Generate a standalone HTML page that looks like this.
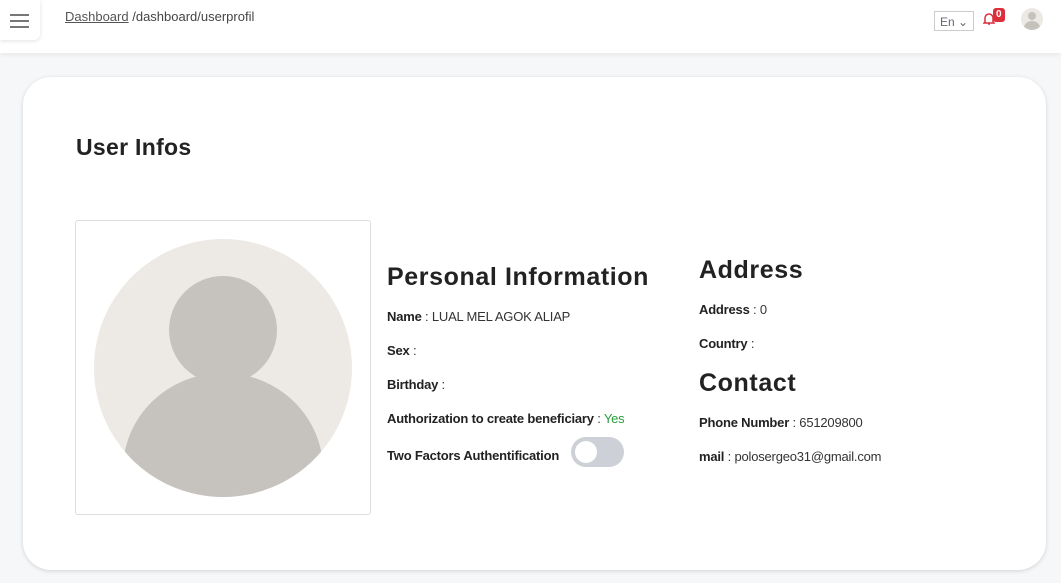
<!DOCTYPE html>
<html><head><style>
*{margin:0;padding:0;box-sizing:border-box}
body{width:1061px;height:583px;overflow:hidden;background:#f6f7f8;font-family:"Liberation Sans",sans-serif;position:relative;color:#222}
.top{position:absolute;left:0;top:0;width:1061px;height:53px;background:#fff;box-shadow:0 2px 4px rgba(0,0,0,.06)}
.menu{position:absolute;left:0;top:0;width:40px;height:40px;background:#fff;border-radius:0 0 6px 0;box-shadow:0 1px 4px rgba(0,0,0,.12)}
.menu i{position:absolute;left:10px;width:19px;height:2px;background:#777}
.crumb{position:absolute;left:65px;top:9px;font-size:13px;color:#444}
.crumb u{color:#555}
.lang{position:absolute;left:934px;top:11px;width:40px;height:20px;border:1px solid #ccc;font-size:12px;color:#667;padding:3px 0 0 5px}
.badge{position:absolute;left:993px;top:8px;background:#dc2f3c;color:#fff;font-size:10px;font-weight:bold;border-radius:3px;padding:0 3px;height:14px;line-height:14px}
.av{position:absolute;left:1021px;top:8px;width:22px;height:22px;border-radius:50%;background:#ece9e4;overflow:hidden}
.card{position:absolute;left:23px;top:77px;width:1023px;height:493px;background:#fff;border-radius:28px;box-shadow:0 1px 4px rgba(0,0,0,.15)}
.t{position:absolute;font-size:13px;color:#333;letter-spacing:-0.2px}
.t b{color:#222}
h1{position:absolute;left:76px;top:134px;font-size:23px;font-weight:bold;letter-spacing:0.3px}
h2{position:absolute;font-size:25px;font-weight:bold;color:#222;letter-spacing:0.6px}
.photo{position:absolute;left:75px;top:220px;width:296px;height:295px;border:1px solid #ddd;border-radius:3px}
.tog{position:absolute;left:571px;top:437px;width:53px;height:30px;border-radius:15px;background:#cdd1d7}
.tog i{position:absolute;left:4px;top:4px;width:22px;height:22px;border-radius:50%;background:#fff}
</style></head><body>
<div class="top">
<div class="menu"><i style="top:14px"></i><i style="top:20px"></i><i style="top:26px"></i></div>
<div class="crumb"><u>Dashboard</u> /dashboard/userprofil</div>
<div class="lang">En ⌄</div>
<svg style="position:absolute;left:983px;top:12px" width="12" height="14" viewBox="0 0 12 14"><path d="M2 10V6a4 4 0 0 1 8 0v4l1 1H1z M5 12h2" fill="none" stroke="#dc2f3c" stroke-width="1.5"/></svg>
<div class="badge">0</div>
<div class="av"><div style="position:absolute;left:7px;top:4px;width:8px;height:8px;border-radius:50%;background:#c5c2bc"></div><div style="position:absolute;left:3px;top:13px;width:16px;height:14px;border-radius:50%;background:#c5c2bc"></div></div>
</div>
<div class="card"></div>
<h1>User Infos</h1>
<div class="photo">
<svg width="296" height="295" style="position:absolute;left:-1px;top:-1px"><defs><clipPath id="c"><circle cx="148" cy="148" r="129"/></clipPath></defs><circle cx="148" cy="148" r="129" fill="#edeae5"/><g clip-path="url(#c)" fill="#c6c3be"><circle cx="148" cy="110" r="54"/><ellipse cx="148" cy="250" rx="100" ry="97"/></g></svg>
</div>
<h2 style="left:387px;top:263px">Personal Information</h2>
<div class="t" style="left:387px;top:309px"><b>Name</b> : LUAL MEL AGOK ALIAP</div>
<div class="t" style="left:387px;top:343px"><b>Sex</b> :</div>
<div class="t" style="left:387px;top:377px"><b>Birthday</b> :</div>
<div class="t" style="left:387px;top:411px"><b>Authorization to create beneficiary</b> : <span style="color:#2a9d3a">Yes</span></div>
<div class="t" style="left:387px;top:448px"><b>Two Factors Authentification</b></div>
<div class="tog"><i></i></div>
<h2 style="left:699px;top:256px">Address</h2>
<div class="t" style="left:699px;top:302px"><b>Address</b> : 0</div>
<div class="t" style="left:699px;top:336px"><b>Country</b> :</div>
<h2 style="left:699px;top:369px">Contact</h2>
<div class="t" style="left:699px;top:415px"><b>Phone Number</b> : 651209800</div>
<div class="t" style="left:699px;top:449px"><b>mail</b> : polosergeo31@gmail.com</div>
</body></html>
